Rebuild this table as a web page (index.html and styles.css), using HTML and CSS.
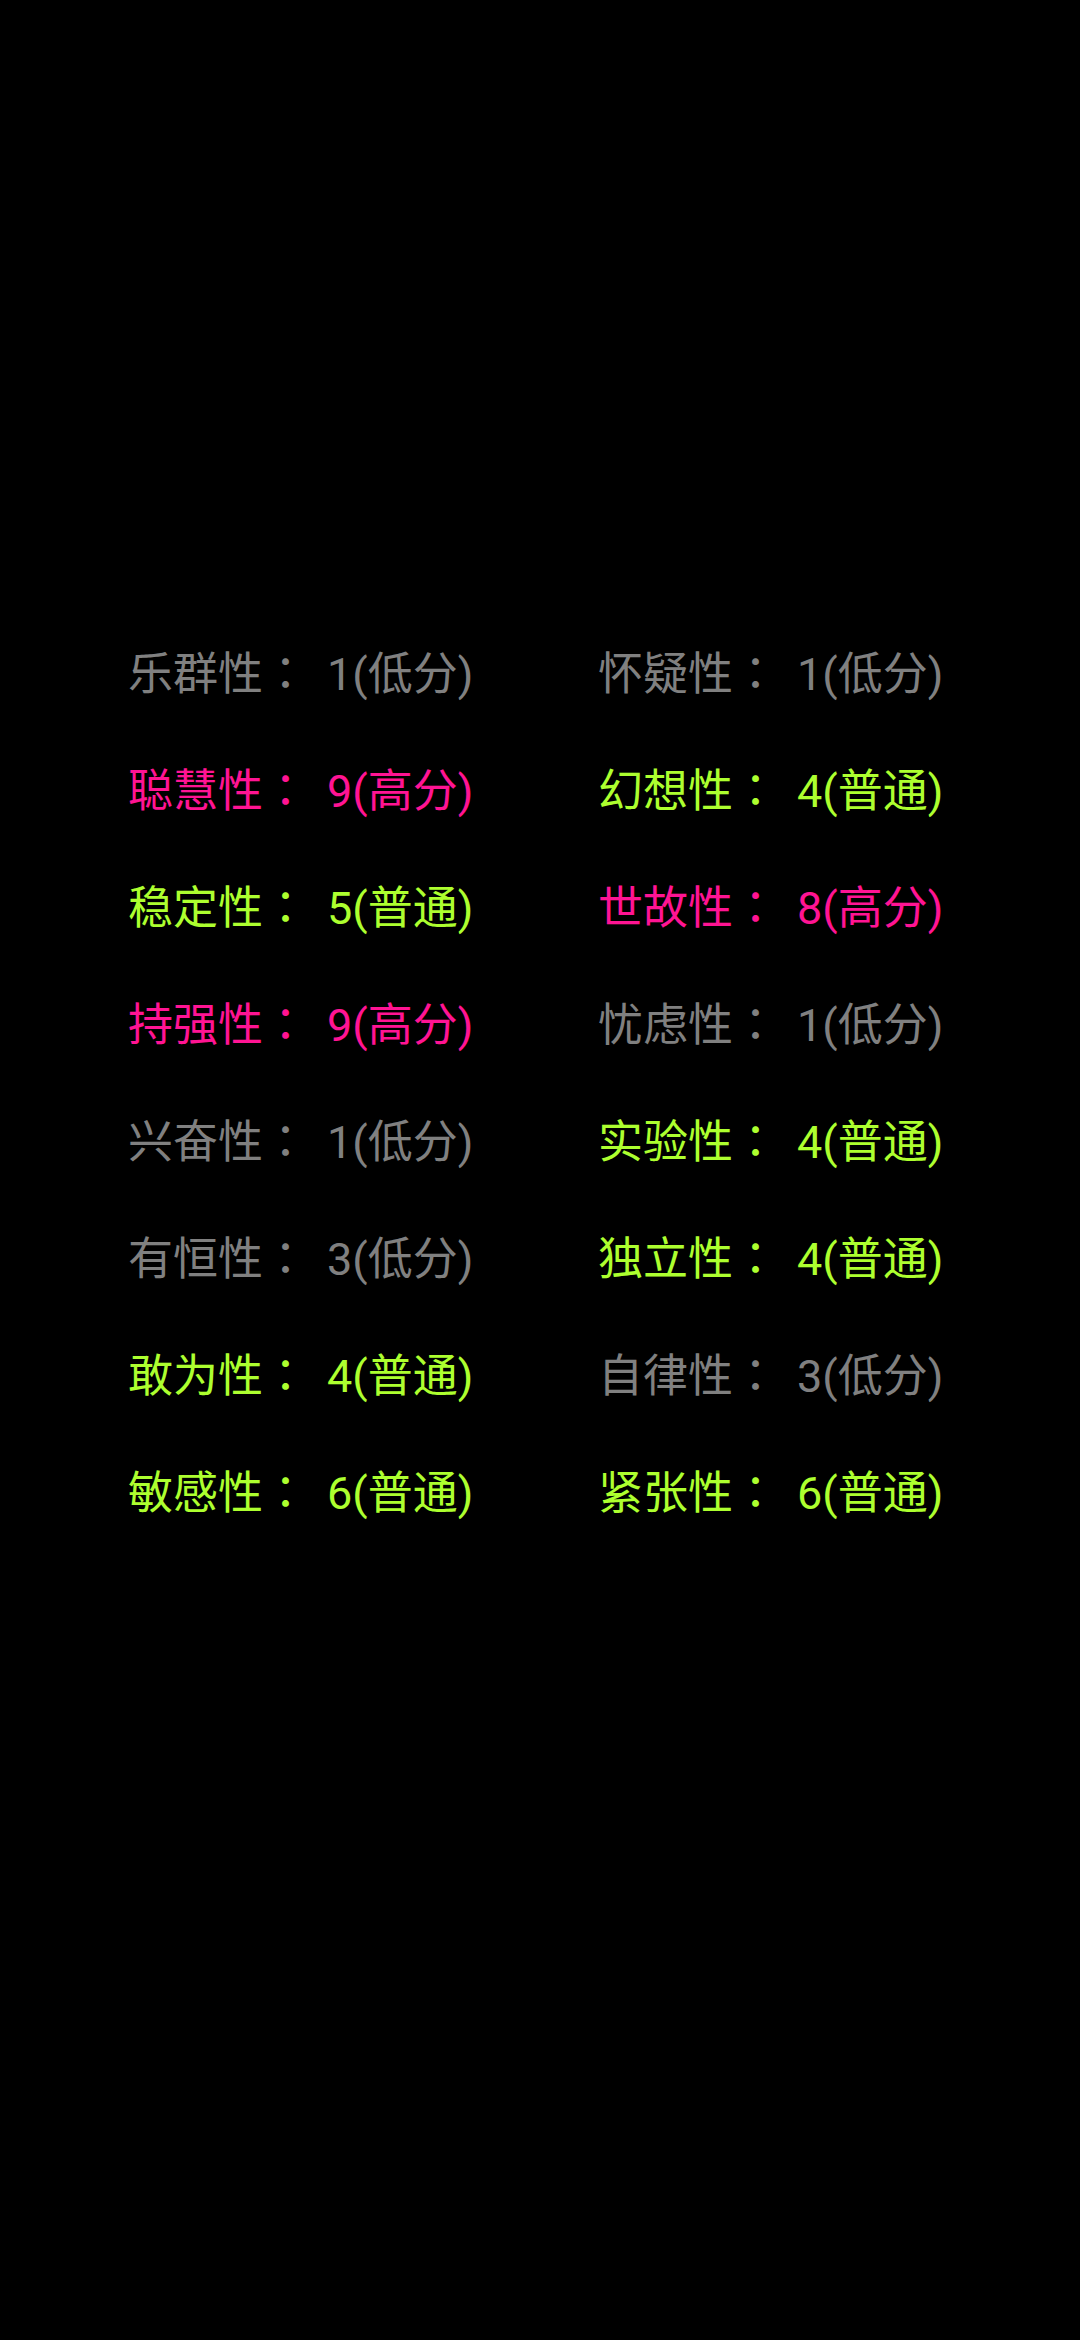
FILE: index.html
```html
<!DOCTYPE html>
<html lang="zh">
<head>
<meta charset="utf-8">
<link rel="stylesheet" href="styles.css">
</head>
<body>
<div class="grid">
  <div class="item low">乐群性<span class="colon">：</span>1(低分)</div>
  <div class="item low">怀疑性<span class="colon">：</span>1(低分)</div>
  <div class="item high">聪慧性<span class="colon">：</span>9(高分)</div>
  <div class="item mid">幻想性<span class="colon">：</span>4(普通)</div>
  <div class="item mid">稳定性<span class="colon">：</span>5(普通)</div>
  <div class="item high">世故性<span class="colon">：</span>8(高分)</div>
  <div class="item high">持强性<span class="colon">：</span>9(高分)</div>
  <div class="item low">忧虑性<span class="colon">：</span>1(低分)</div>
  <div class="item low">兴奋性<span class="colon">：</span>1(低分)</div>
  <div class="item mid">实验性<span class="colon">：</span>4(普通)</div>
  <div class="item low">有恒性<span class="colon">：</span>3(低分)</div>
  <div class="item mid">独立性<span class="colon">：</span>4(普通)</div>
  <div class="item mid">敢为性<span class="colon">：</span>4(普通)</div>
  <div class="item low">自律性<span class="colon">：</span>3(低分)</div>
  <div class="item mid">敏感性<span class="colon">：</span>6(普通)</div>
  <div class="item mid">紧张性<span class="colon">：</span>6(普通)</div>
</div>
</body>
</html>
```
FILE: styles.css
```css
html, body {
  margin: 0;
  padding: 0;
  background: #000;
  width: 1080px;
  height: 2340px;
}
body {
  font-family: Roboto, "Noto Sans CJK SC", sans-serif;
  font-size: 45px;
}
.grid {
  display: grid;
  grid-template-columns: 470px 470px;
  grid-auto-rows: 117px;
  padding: 612px 0 0 128px;
}
.item {
  line-height: 117px;
  white-space: nowrap;
}
.colon {
  display: inline-block;
  width: 64px;
  text-align: left;
  font-family: "Noto Sans CJK TC", sans-serif;
}
.low { color: #808080; }
.high { color: #ff1493; }
.mid { color: #adff2f; }
```
